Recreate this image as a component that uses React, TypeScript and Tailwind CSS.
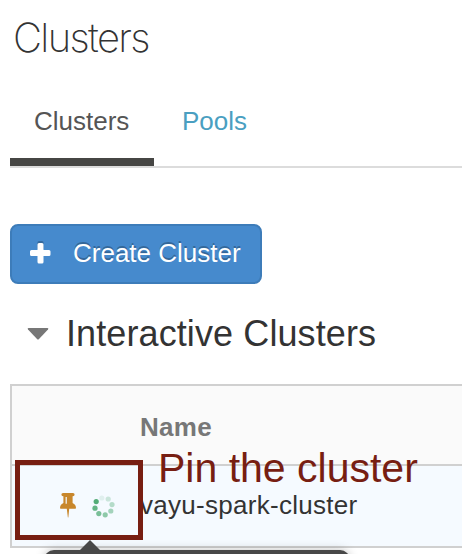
const dots = [
  { x: 5.2, y: 8.6, o: 0.95 },
  { x: 4, y: 15.2, o: 0.85 },
  { x: 7.8, y: 20.6, o: 0.72 },
  { x: 14.2, y: 21.8, o: 0.6 },
  { x: 19.8, y: 18, o: 0.48 },
  { x: 21, y: 11.6, o: 0.38 },
  { x: 17.2, y: 6, o: 0.25 },
  { x: 10.8, y: 5, o: 0.12 },
];

function Spinner() {
  return (
    <svg className="ml-[15px] h-[26px] w-[25px]" viewBox="0 0 25 26">
      {dots.map((d) => (
        <circle key={d.x} cx={d.x} cy={d.y} r="2.6" fill="#4aa870" opacity={d.o} />
      ))}
    </svg>
  );
}

function Pin() {
  return (
    <svg className="h-[25px] w-4" viewBox="0 0 16 25" fill="#c8872c">
      <path
        fillRule="evenodd"
        d="M3 0H13Q14.6 0 14.6 1.6T13 3.2H12.6V10Q16 11.5 16 15Q16 15.8 15.2 15.8H9.2L8.4 24Q8.1 25 7.8 24L6.8 15.8H.8Q0 15.8 0 15Q0 11.5 3.4 10V3.2H3Q1.4 3.2 1.4 1.6T3 0ZM5.6 4V10.8H6.8V4Z"
      />
    </svg>
  );
}

export default function App() {
  return (
    <div className="relative h-[554px] w-[462px] overflow-hidden bg-white pl-[10px] font-['Liberation_Sans',Arial,sans-serif] text-[#333]">
      <h1 className="h-[76px] pl-[3px] pt-[14px] font-['Inter',sans-serif] text-[40px] font-extralight leading-[48px] tracking-[-1.65px]">
        Clusters
      </h1>
      <nav className="flex h-[92px] border-b-2 border-[#dcdcdc] text-[26px] leading-[30px]">
        <div className="h-[90px] w-[144px] border-b-8 border-[#464644] pl-6 pt-[30px] text-[#555]">Clusters</div>
        <div className="pl-[28px] pt-[30px] text-[#4a9fc1]">Pools</div>
      </nav>
      <button className="mt-14 flex h-[60px] w-[252px] items-center rounded-lg border-2 border-[#3d7cb9] bg-[#468acd] pb-[2px] pl-[18px] text-[26px] leading-[30px] text-white [text-shadow:0_-2px_0_rgba(0,0,0,0.25)]">
        <svg className="mb-[1px] h-[23px] w-[21px]" viewBox="0 0 21 23">
          <path d="M9 0h3q1.5 0 1.500 1.500V8H7.500V1.500Q7.500 0 9 0Z" fill="#356a9e" />
          <path
            d="M9 2h3q1.5 0 1.5 1.5V9h5.5q1.5 0 1.5 1.5v3q0 1.5-1.5 1.5h-5.5v6q0 1.5-1.5 1.5H9q-1.5 0-1.5-1.5v-6H1.5Q0 15 0 13.5v-3Q0 9 1.5 9h6V3.5Q7.500 2 9 2Z"
            fill="white"
          />
        </svg>
        <span className="ml-[22px]">Create Cluster</span>
      </button>
      <h2 className="flex h-[100px] pt-[30px] text-[36px] leading-[40px]">
        <svg className="ml-[17px] mt-[14px] h-3 w-[22px]" viewBox="0 0 22 12">
          <path d="M1.500 0h19q1.500 0 .5 1.500l-9 9.500q-1 1-2 0L1 1.500Q0 0 1.500 0Z" fill="#777" />
        </svg>
        <span className="ml-[17px] tracking-[0.1px]">Interactive Clusters</span>
      </h2>
      <div className="border-y-2 border-l-2 border-[#d0d0d0] text-[26px] leading-[30px]">
        <div className="h-[80px] border-b-2 border-[#d0d0d0] bg-[#fafafa] pl-[128px] pt-[26px] font-bold tracking-[0.3px] text-[#777]">
          Name
        </div>
        <div className="flex h-[80px] bg-[#f5faff] pl-[48px] pt-[27px]">
          <Pin />
          <Spinner />
          <span className="-mt-[3px] ml-[24px] tracking-[0.28px]">vayu-spark-cluster</span>
        </div>
      </div>
      <div className="absolute left-[15px] top-[460px] h-[80px] w-[128px] border-[5px] border-[#771e12]" />
      <div className="absolute left-[158px] top-[444px] whitespace-nowrap text-[41px] leading-[48px] text-[#771e12]">
        Pin the cluster
      </div>
      <div className="absolute left-[44px] top-[550px] h-5 w-[306px] rounded-t-[10px] bg-[#484848] shadow-[0_0_10px_rgba(0,0,0,0.25)]" />
      <svg className="absolute left-[80px] top-[540px] h-[10px] w-5" viewBox="0 0 20 10">
        <path d="M0 10L10 0l10 10Z" fill="#484848" />
      </svg>
    </div>
  );
}
